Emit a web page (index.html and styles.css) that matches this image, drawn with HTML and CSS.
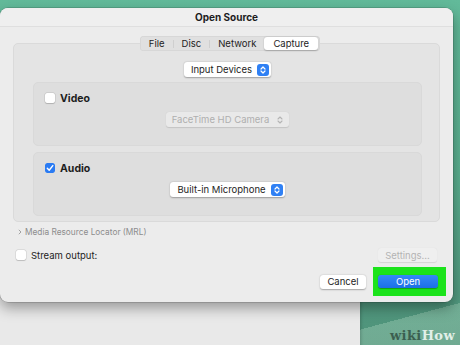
FILE: index.html
```html
<!DOCTYPE html>
<html>
<head>
<meta charset="utf-8">
<link rel="stylesheet" href="styles.css">
</head>
<body>
<div class="desktop">
  <div class="backwin"></div>
  <div class="dialog">
    <div class="titlebar">Open Source</div>
    <div class="content">
      <div class="tabview">
        <div class="segmented">
          <span class="seg">File</span><span class="sep"></span>
          <span class="seg">Disc</span><span class="sep"></span>
          <span class="seg">Network</span>
          <span class="seg sel">Capture</span>
        </div>
        <div class="panel">
          <div class="popup">
            <span>Input Devices</span>
            <svg class="stepper" width="12" height="12" viewBox="0 0 12 12"><rect width="12" height="12" rx="3" fill="#2f80f4"/><path d="M4 5 L6 3 L8 5 M4 7 L6 9 L8 7" stroke="#fff" stroke-width="1.2" fill="none" stroke-linecap="round" stroke-linejoin="round"/></svg>
          </div>
          <div class="group">
            <div class="check-row">
              <span class="box"></span><span class="check-label">Video</span>
            </div>
            <div class="popup disabled">
              <span>FaceTime HD Camera</span>
              <svg class="stepper" width="12" height="12" viewBox="0 0 12 12"><path d="M4 5 L6 3 L8 5 M4 7 L6 9 L8 7" stroke="#b4b4b4" stroke-width="1.1" fill="none" stroke-linecap="round" stroke-linejoin="round"/></svg>
            </div>
          </div>
          <div class="group audio">
            <div class="check-row">
              <svg class="box checked" width="10" height="10" viewBox="0 0 10 10"><rect width="10" height="10" rx="2" fill="#2a7bf3"/><path d="M2.3 5.2 L4.2 7.3 L7.8 2.6" stroke="#fff" stroke-width="1.4" fill="none" stroke-linecap="round" stroke-linejoin="round"/></svg>
              <span class="check-label">Audio</span>
            </div>
            <div class="popup">
              <span>Built-in Microphone</span>
              <svg class="stepper" width="12" height="12" viewBox="0 0 12 12"><rect width="12" height="12" rx="3" fill="#2f80f4"/><path d="M4 5 L6 3 L8 5 M4 7 L6 9 L8 7" stroke="#fff" stroke-width="1.2" fill="none" stroke-linecap="round" stroke-linejoin="round"/></svg>
            </div>
          </div>
        </div>
      </div>
      <div class="mrl">
        <svg width="4" height="6" viewBox="0 0 4 6"><path d="M0.8 0.8 L3 3 L0.8 5.2" stroke="#9a9a9a" stroke-width="0.9" fill="none"/></svg>
        <span>Media Resource Locator (MRL)</span>
      </div>
      <div class="stream-row">
        <div class="stream-left"><span class="box"></span><span>Stream output:</span></div>
        <span class="btn settings">Settings...</span>
      </div>
      <div class="buttons-row">
        <span class="btn cancel">Cancel</span>
        <span class="highlight"><span class="btn open">Open</span></span>
      </div>
    </div>
  </div>
  <div class="logo">wiki<span class="how">How</span></div>
</div>
</body>
</html>
```

FILE: styles.css
```css
* { box-sizing: border-box; }
html, body { margin: 0; padding: 0; }
body {
  font-family: Inter, "Noto Sans", sans-serif;
  color: #1d1d1d;
  font-size: 9.5px;
}
.desktop {
  position: relative;
  width: 460px;
  height: 345px;
  overflow: hidden;
  background:
    linear-gradient(165deg, rgba(255,255,255,0) 0 91%, rgba(200,235,212,0.28) 91% 100%),
    linear-gradient(180deg, #62ba9a 0%, #5aaf8f 50%, #4e9179 100%);
}
.backwin {
  position: absolute;
  left: -10px;
  top: 250px;
  width: 370px;
  height: 120px;
  background: #e9e9e9;
  box-shadow: 1px 0 3px rgba(0,0,0,0.2);
}
.dialog {
  position: absolute;
  left: 0;
  top: 8px;
  width: 453px;
  height: 294px;
  background: #ececec;
  border-radius: 8px;
  box-shadow: 0 6px 14px rgba(0,0,0,0.35), 0 0 0 0.5px rgba(0,0,0,0.25);
  display: flex;
  flex-direction: column;
  overflow: hidden;
}
.titlebar {
  height: 19px;
  line-height: 18px;
  text-align: center;
  font-weight: 700;
  font-size: 10px;
  background: #efefef;
  border-bottom: 1px solid #dfdfdf;
}
.content {
  display: flex;
  flex-direction: column;
  padding: 0 13px;
}
.tabview {
  display: flex;
  flex-direction: column;
  margin-top: 9px;
}
.segmented {
  position: relative;
  z-index: 1;
  align-self: center;
  display: flex;
  align-items: center;
  height: 15px;
  padding: 1px 2px 1px 1px;
  background: #e0e0e0;
  border-radius: 4px;
  box-shadow: inset 0 0 0 0.5px rgba(0,0,0,0.08);
  margin-left: 7px;
}
.seg {
  height: 13px;
  line-height: 13px;
  padding: 0 8px;
}
.sep {
  width: 1px;
  height: 8px;
  background: #cfcfcf;
}
.seg.sel {
  padding: 0 9px;
  background: #ffffff;
  border-radius: 3px;
  box-shadow: 0 0.5px 1.5px rgba(0,0,0,0.25);
}
.panel {
  margin-top: -8px;
  height: 179px;
  background: #e4e4e4;
  border: 1px solid #dadada;
  border-radius: 5px;
  padding: 18px 17px 5px 19px;
  display: flex;
  flex-direction: column;
}
.popup {
  align-self: center;
  display: inline-flex;
  align-items: center;
  gap: 5px;
  height: 15px;
  padding: 0 2px 0 7px;
  background: #ffffff;
  border-radius: 3px;
  box-shadow: 0 0.5px 1.5px rgba(0,0,0,0.3);
  white-space: nowrap;
}
.popup.disabled {
  background: #e9e9e9;
  color: #afafaf;
  box-shadow: 0 0.5px 1px rgba(0,0,0,0.12);
  padding: 0 3px 0 6px;
}
.stepper { display: block; flex: none; }
.group {
  margin-top: 5px;
  height: 64px;
  background: #dedede;
  border: 1px solid #d9d9d9;
  border-radius: 5px;
  padding: 10px 11px 0 11px;
  display: flex;
  flex-direction: column;
}
.group.audio { margin-top: 6px; }
.group .popup { margin-top: 9px; }
.check-row {
  display: flex;
  align-items: center;
  gap: 5px;
  height: 10px;
}
.check-label {
  font-weight: 700;
  font-size: 10.5px;
}
.box {
  display: block;
  flex: none;
  width: 10px;
  height: 10px;
  border-radius: 2px;
  background: #ffffff;
  box-shadow: 0 0 0 0.5px rgba(0,0,0,0.12), 0 0.5px 1px rgba(0,0,0,0.15);
}
svg.box { background: none; box-shadow: none; }
.mrl {
  margin-top: 5px;
  height: 10px;
  display: flex;
  align-items: center;
  gap: 3px;
  padding-left: 5px;
  font-size: 8.3px;
  color: #8c8c8c;
}
.mrl svg { display: block; }
.stream-row {
  margin-top: 11px;
  height: 14px;
  display: flex;
  align-items: center;
  justify-content: space-between;
  padding: 0 3px;
}
.stream-left {
  display: flex;
  align-items: center;
  gap: 5px;
}
.btn {
  display: inline-flex;
  align-items: center;
  justify-content: center;
  height: 14px;
  border-radius: 3px;
  background: #ffffff;
  box-shadow: 0 0.5px 1.5px rgba(0,0,0,0.3);
}
.settings {
  width: 59px;
  background: #efefef;
  color: #b4b4b4;
  box-shadow: 0 0.5px 1px rgba(0,0,0,0.1);
}
.buttons-row {
  margin-top: 5px;
  margin-right: -6px;
  display: flex;
  justify-content: flex-end;
  align-items: center;
  gap: 7px;
}
.cancel { width: 46px; }
.highlight {
  display: block;
  padding: 8px 8px 8px 5px;
  background: #1be31b;
}
.open {
  display: flex;
  width: 60px;
  height: 13px;
  color: #ffffff;
  background: linear-gradient(180deg, #3589f7 0%, #1c6fe8 100%);
  box-shadow: 0 0.5px 1px rgba(0,0,0,0.3);
}
.logo {
  position: absolute;
  right: 5px;
  top: 328px;
  font-family: "DejaVu Serif", "Liberation Serif", serif;
  font-weight: 700;
  font-size: 13px;
  letter-spacing: 0.4px;
  line-height: 15px;
  color: #3b5f50;
}
.logo .how { color: #e2f0e8; }
```
